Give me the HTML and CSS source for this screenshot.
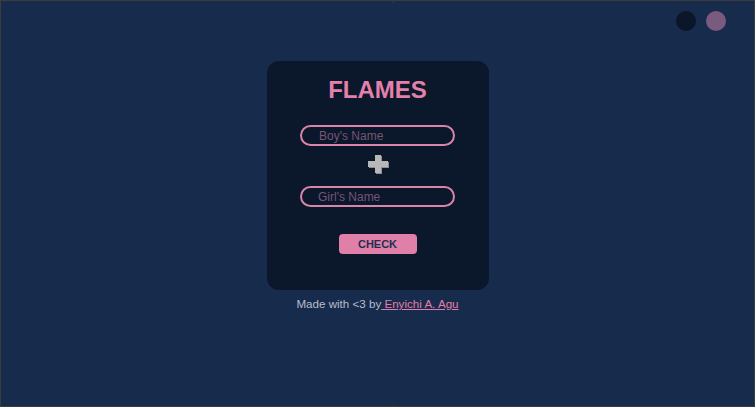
FILE: index.html
```html
<!DOCTYPE html>
<html lang="en">
<head>
<meta charset="utf-8">
<title>FLAMES</title>
<link rel="stylesheet" href="styles.css">
</head>
<body>
<div class="page">
  <header class="toggles">
    <span class="dot dot-dark"></span>
    <span class="dot dot-mauve"></span>
  </header>
  <main class="card">
    <h1 class="title">FLAMES</h1>
    <input class="field" type="text" placeholder="Boy's Name">
    <svg class="plus" width="21" height="19" viewBox="0 0 21 19" aria-hidden="true">
      <path d="M8 1h6v6h7v6h-7v6H8v-6H1V7h7z" fill="#8e8e8e"/>
      <path d="M7 0h6v6h7v6h-7v6H7v-6H0V6h7z" fill="#b8b8b8"/>
    </svg>
    <input class="field field-girl" type="text" placeholder="Girl's Name">
    <button class="check" type="button">CHECK</button>
  </main>
  <p class="footer">Made with &lt;3 by<a class="author" href="#">&nbsp;Enyichi A. Agu</a></p>
</div>
</body>
</html>
```
FILE: styles.css
```css
html, body {
  margin: 0;
  padding: 0;
  background: #ffffff;
}

body {
  font-family: "Liberation Sans", Arial, sans-serif;
}

.page {
  position: relative;
  box-sizing: border-box;
  width: 755px;
  height: 407px;
  border: 1px solid #3c3c3c;
  background: #172b4d;
  display: flex;
  flex-direction: column;
  align-items: center;
}

.page::before,
.page::after {
  content: "";
  position: absolute;
  left: 392px;
  width: 1px;
  background: #3c3c3c;
}

.page::before {
  top: -1px;
  height: 3px;
}

.page::after {
  bottom: -3px;
  height: 4px;
}

.toggles {
  align-self: stretch;
  display: flex;
  justify-content: flex-end;
  gap: 10px;
  padding: 10px 28px 0 0;
}

.dot {
  width: 20px;
  height: 20px;
  border-radius: 50%;
}

.dot-dark {
  background: #0c1629;
}

.dot-mauve {
  background: #7b5a80;
}

.card {
  box-sizing: border-box;
  width: 222px;
  margin-top: 30px;
  padding: 15px 0 36px;
  background: #0b172a;
  border-radius: 12px;
  display: flex;
  flex-direction: column;
  align-items: center;
}

.title {
  margin: 0;
  font-size: 24px;
  line-height: 28px;
  font-weight: bold;
  color: #e480a9;
}

.field {
  box-sizing: border-box;
  width: 155px;
  height: 21px;
  margin-top: 21px;
  padding: 0 0 0 17px;
  border: 2px solid #d984a9;
  border-radius: 11px;
  background: transparent;
  font-family: "Liberation Sans", Arial, sans-serif;
  font-size: 12px;
  color: #d6d6e0;
  outline: none;
}

.field::placeholder {
  color: #755576;
}

.plus {
  display: block;
  margin-top: 9px;
  margin-left: 2px;
}

.field-girl {
  margin-top: 12px;
  padding-left: 16px;
}

.check {
  box-sizing: border-box;
  width: 78px;
  height: 20px;
  margin-top: 27px;
  padding: 0;
  border: none;
  border-radius: 4px;
  background: #e080a8;
  font-family: "Liberation Sans", Arial, sans-serif;
  font-size: 11px;
  font-weight: bold;
  color: #1e2e52;
}

.footer {
  margin: 7px 0 0;
  font-size: 11.6px;
  line-height: 14px;
  color: #b8bdc9;
}

.author {
  color: #e07fa8;
  text-decoration: underline;
}
```
